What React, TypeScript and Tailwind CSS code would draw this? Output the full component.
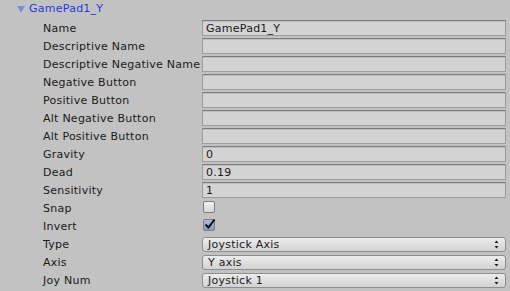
import type { ReactNode } from 'react'

type Row =
  | { label: string; kind: 'text'; value?: string }
  | { label: string; kind: 'check'; checked: boolean }
  | { label: string; kind: 'select'; value: string }

const rows: Row[] = [
  { label: 'Name', kind: 'text', value: 'GamePad1_Y' },
  { label: 'Descriptive Name', kind: 'text' },
  { label: 'Descriptive Negative Name', kind: 'text' },
  { label: 'Negative Button', kind: 'text' },
  { label: 'Positive Button', kind: 'text' },
  { label: 'Alt Negative Button', kind: 'text' },
  { label: 'Alt Positive Button', kind: 'text' },
  { label: 'Gravity', kind: 'text', value: '0' },
  { label: 'Dead', kind: 'text', value: '0.19' },
  { label: 'Sensitivity', kind: 'text', value: '1' },
  { label: 'Snap', kind: 'check', checked: false },
  { label: 'Invert', kind: 'check', checked: true },
  { label: 'Type', kind: 'select', value: 'Joystick Axis' },
  { label: 'Axis', kind: 'select', value: 'Y axis' },
  { label: 'Joy Num', kind: 'select', value: 'Joystick 1' },
]

function TextField({ value }: { value?: string }) {
  return (
    <div className="h-[16px] mt-[1px] border border-[#9c9c9c] border-t-[#7c7c7c] bg-[#d3d3d3] shadow-[inset_0_1px_0_#bdbdbd] flex items-center pl-[3px] text-[11px] leading-none text-[#1a1a1a]">
      {value}
    </div>
  )
}

function CheckBox({ checked }: { checked: boolean }) {
  return (
    <div
      className={`w-[12px] h-[12px] mt-[2px] ml-[1px] rounded-[2px] border border-[#7d7d7d] relative ${
        checked ? 'bg-gradient-to-b from-[#a9bddf] to-[#7f9bcb]' : 'bg-gradient-to-b from-[#f2f2f2] to-[#d6d6d6]'
      }`}
    >
      {checked && (
        <svg viewBox="0 0 12 12" className="absolute left-[0px] top-[-2px] w-[12px] h-[12px]">
          <path d="M1.5 6.5 L4.5 9.5 L10.5 1.5" fill="none" stroke="#0a0a0a" strokeWidth="2" />
        </svg>
      )}
    </div>
  )
}

function Select({ value }: { value: string }) {
  return (
    <div className="h-[15px] mt-[2px] rounded-[3px] border border-[#8e8e8e] bg-gradient-to-b from-[#ececec] to-[#d2d2d2] flex items-center pl-[5px] pr-[6px] text-[11px] leading-none text-[#1a1a1a]">
      <span className="flex-1">{value}</span>
      <svg viewBox="0 0 5 9" className="w-[5px] h-[9px]">
        <path d="M2.5 0.5 L4.5 3 L0.5 3 Z M2.5 8.5 L4.5 6 L0.5 6 Z" fill="#222" />
      </svg>
    </div>
  )
}

function Field({ row }: { row: Row }): ReactNode {
  if (row.kind === 'text') return <TextField value={row.value} />
  if (row.kind === 'check') return <CheckBox checked={row.checked} />
  return <Select value={row.value} />
}

export default function App() {
  return (
    <div
      className="w-[510px] h-[291px] bg-[#c2c2c2] overflow-hidden text-[#1a1a1a] tracking-[0.25px]"
      style={{ fontFamily: '"DejaVu Sans", Verdana, sans-serif' }}
    >
      <div className="h-[19px] flex items-center pl-[17px] text-[11px]">
        <svg viewBox="0 0 8 7" className="w-[8px] h-[7px] mr-[4px]">
          <path d="M0 0 L8 0 L4 7 Z" fill="#7b8fd8" />
        </svg>
        <span className="text-[#1c3ae0]">GamePad1_Y</span>
      </div>
      {rows.map((row) => (
        <div key={row.label} className="h-[18px] flex">
          <div className="w-[202px] shrink-0 pl-[43px] text-[11px] leading-[19px] whitespace-nowrap">{row.label}</div>
          <div className="flex-1 mr-[4px]">
            <Field row={row} />
          </div>
        </div>
      ))}
    </div>
  )
}
